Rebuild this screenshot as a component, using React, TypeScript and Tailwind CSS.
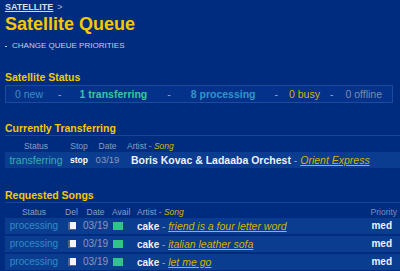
import React from 'react';

const songs = [
  { title: 'friend is a four letter word' },
  { title: 'italian leather sofa' },
  { title: 'let me go' },
];

const SectionTitle: React.FC<{ children: React.ReactNode; line?: boolean }> = ({ children, line }) => (
  <div className={line ? 'border-b border-[#17479a] pb-[1px]' : ''}>
    <h2 className="text-[10.5px] leading-[12px] font-bold text-[#f5c800]">{children}</h2>
  </div>
);

const Dash = () => <span className="text-[#9aa8c8]">-</span>;

const App: React.FC = () => {
  return (
    <div className="w-[400px] h-[271px] overflow-hidden bg-[#002c80] font-['Liberation_Sans',Arial,sans-serif] pl-[5px]">
      {/* breadcrumb */}
      <div className="pt-[1px] h-[12px] leading-[12px] text-[9px] text-[#d6dcea]">
        <a className="font-bold underline">SATELLITE</a>
        <span className="ml-[4px] text-[#aab4cc]">&gt;</span>
      </div>

      <h1 className="mt-[1px] h-[22px] leading-[22px] text-[18px] font-bold text-[#f5c800]">Satellite Queue</h1>

      <div className="mt-[6px] flex items-center h-[10px] text-[8px] leading-[10px] text-[#c6cee0]">
        <span className="w-[2px] h-[1px] bg-[#c6cee0] mr-[5px]" />
        CHANGE QUEUE PRIORITIES
      </div>

      {/* satellite status */}
      <div className="mt-[20px]">
        <SectionTitle>Satellite Status</SectionTitle>
      </div>
      <div className="mt-[2px] mr-[7px] h-[18px] border border-[#1d4b9c] bg-[#04318a] flex items-center text-[10.5px] leading-[12px] pl-[9px]">
        <span className="text-[#3a90c4]">0 new</span>
        <span className="ml-[15px]"><Dash /></span>
        <span className="ml-[18px] font-bold text-[#36c6a2]">1 transferring</span>
        <span className="ml-[20px]"><Dash /></span>
        <span className="ml-[20px] font-bold text-[#3196cc]">8 processing</span>
        <span className="ml-[19px]"><Dash /></span>
        <span className="ml-[11px] text-[#d2b400]">0 busy</span>
        <span className="ml-[10px]"><Dash /></span>
        <span className="ml-[12px] text-[#7c8cae]">0 offline</span>
      </div>

      {/* currently transferring */}
      <div className="mt-[19px]">
        <SectionTitle line>Currently Transferring</SectionTitle>
      </div>
      <div className="mt-[4px] flex items-end h-[12px] text-[8.5px] leading-[12px] text-[#8e9cc0]">
        <span className="w-[62px] text-center">Status</span>
        <span className="w-[24px] text-center">Stop</span>
        <span className="w-[33px] text-center">Date</span>
        <span className="pl-[3px]">
          Artist - <i className="text-[#d2b400]">Song</i>
        </span>
      </div>
      <div className="h-[16px] bg-[#0a3c90] flex items-center text-[10.5px] leading-[12px]">
        <span className="w-[62px] text-center text-[#30b4a8]">transferring</span>
        <span className="w-[24px] text-center text-[8.5px] font-bold text-white">stop</span>
        <span className="w-[33px] text-center text-[9.5px] text-[#8a98b8]">03/19</span>
        <span className="pl-[7px] font-bold text-[#eef1f8] whitespace-nowrap">
          Boris Kovac &amp; Ladaaba Orchest
          <span className="font-normal text-[#9aa8c8]"> - </span>
          <i className="font-normal text-[#d2b400] underline">Orient Express</i>
        </span>
      </div>

      {/* requested songs */}
      <div className="mt-[21px]">
        <SectionTitle line>Requested Songs</SectionTitle>
      </div>
      <div className="mt-[3px] flex items-end h-[12px] text-[8.5px] leading-[12px] text-[#8e9cc0]">
        <span className="w-[58px] text-center">Status</span>
        <span className="w-[17px] text-center">Del</span>
        <span className="w-[31px] text-center">Date</span>
        <span className="w-[26px] pl-[1px]">Avail</span>
        <span>
          Artist - <i className="text-[#d2b400]">Song</i>
        </span>
        <span className="ml-auto mr-[3px] text-[#7f8eb2]">Priority</span>
      </div>
      <div className="flex flex-col gap-[2px]">
        {songs.map((s) => (
          <div key={s.title} className="h-[16px] bg-[#0a3c90] flex items-center text-[10px] leading-[12px]">
            <span className="w-[58px] text-center text-[#2f8cc6]">processing</span>
            <span className="w-[17px] flex justify-center">
              <span className="w-[8px] h-[8px] bg-[#f2f4fa] border-l-2 border-b border-[#56627e]" />
            </span>
            <span className="w-[31px] text-center text-[#8a98b8]">03/19</span>
            <span className="w-[26px] pl-[2px]">
              <span className="block w-[10px] h-[8px] bg-[#30c48c]" />
            </span>
            <span className="font-bold text-[#eef1f8] whitespace-nowrap">
              cake
              <span className="font-normal text-[#9aa8c8]"> - </span>
              <i className="font-normal text-[10.5px] text-[#d2b400] underline">{s.title}</i>
            </span>
            <span className="ml-auto mr-[8px] font-bold text-[#eef1f8]">med</span>
          </div>
        ))}
      </div>
    </div>
  );
};

export default App;
